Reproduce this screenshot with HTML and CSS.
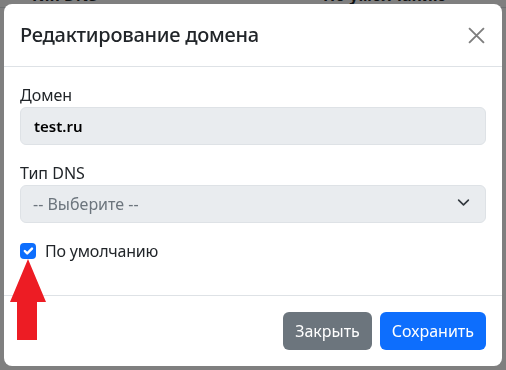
FILE: index.html
```
<!DOCTYPE html>
<html lang="ru">
<head>
    <meta charset="UTF-8">
    <meta name="viewport" content="width=device-width, initial-scale=1.0">
    <title>Домены</title>
    <link rel="stylesheet" href="styles.css">
</head>
<body>
    <div class="page">
        <table class="domains">
            <thead>
                <tr>
                    <th class="col-type">Тип DNS</th>
                    <th>По умолчанию</th>
                </tr>
            </thead>
        </table>
    </div>

    <div class="backdrop"></div>

    <div class="modal">
        <div class="modal-header">
            <h5 class="modal-title">Редактирование домена</h5>
            <button type="button" class="btn-close" aria-label="Close">
                <svg width="16" height="16" viewBox="0 0 16 16">
                    <path d="M1 1 15 15M15 1 1 15" stroke="#000" stroke-width="1.8" fill="none"/>
                </svg>
            </button>
        </div>

        <div class="modal-body">
            <div class="form-group">
                <label for="domain">Домен</label>
                <input type="text" id="domain" class="form-control" value="test.ru" readonly>
            </div>
            <div class="form-group">
                <label for="dns-type">Тип DNS</label>
                <div class="select-wrap">
                    <select id="dns-type" class="form-select" disabled>
                        <option>-- Выберите --</option>
                    </select>
                    <svg class="chevron" width="16" height="16" viewBox="0 0 16 16">
                        <path d="m2 5 6 6 6-6" stroke="#343a40" stroke-width="2" stroke-linecap="round" stroke-linejoin="round" fill="none"/>
                    </svg>
                </div>
            </div>
            <div class="form-check">
                <span class="check-box">
                    <svg width="16" height="16" viewBox="0 0 20 20">
                        <path d="m6 10 3 3 6-6" stroke="#fff" stroke-width="3" stroke-linecap="round" stroke-linejoin="round" fill="none"/>
                    </svg>
                </span>
                <label>По умолчанию</label>
            </div>
        </div>

        <div class="modal-footer">
            <button type="button" class="btn btn-secondary">Закрыть</button>
            <button type="button" class="btn btn-primary">Сохранить</button>
        </div>
    </div>

    <!-- annotation arrow -->
    <svg class="arrow" width="36" height="82" viewBox="0 0 36 82">
        <polygon points="18,0 36,43 27,43 27,81 7,81 7,43 0,43" fill="#ed1c24"/>
    </svg>
</body>
</html>
```

FILE: styles.css
```
body {
    font-family: 'Noto Sans', sans-serif;
    color: #212529;
    margin: 0;
    padding: 0;
    background-color: #fff;
    font-size: 16px;
    line-height: 1.5;
}
.page {
    margin-top: -17px;
}
.domains {
    border-collapse: collapse;
    width: 100%;
}
.domains th {
    text-align: left;
    padding: 0 0 0 30px;
    height: 24px;
    border-bottom: 1px solid #dee2e6;
}
.domains .col-type {
    width: 263px;
}
.backdrop {
    position: fixed;
    inset: 0;
    background-color: rgba(0, 0, 0, 0.5);
}
.modal {
    position: fixed;
    top: 4px;
    left: 4px;
    width: 498px;
    height: 362px;
    background-color: #fff;
    border-radius: 8px;
    display: flex;
    flex-direction: column;
    overflow: hidden;
}
.modal-header {
    display: flex;
    align-items: center;
    justify-content: space-between;
    padding: 16px;
    border-bottom: 1px solid #dee2e6;
}
.modal-title {
    margin: 0;
    font-size: 20px;
    font-weight: 500;
    line-height: 30px;
    letter-spacing: -0.25px;
}
.btn-close {
    border: none;
    background: none;
    padding: 0;
    margin-right: 1px;
    width: 17px;
    height: 17px;
    opacity: 0.5;
    display: flex;
    align-items: center;
    justify-content: center;
}
.btn-close svg {
    width: 17px;
    height: 17px;
}
.modal-body {
    padding: 16px;
    flex: 1;
}
.form-group {
    margin-bottom: 16px;
}
.form-group label {
    display: block;
}
.form-control,
.form-select {
    display: block;
    width: 100%;
    box-sizing: border-box;
    height: 38px;
    padding: 6px 12px;
    font-family: inherit;
    font-size: 16px;
    line-height: 1.5;
    border: 1px solid #dee2e6;
    border-radius: 6px;
    background-color: #e9ecef;
}
.form-control {
    color: #000;
    font-size: 15px;
    font-weight: 600;
    padding-left: 13px;
}
.form-select {
    appearance: none;
    color: #6c757d;
    opacity: 1;
}
.select-wrap {
    position: relative;
}
.chevron {
    position: absolute;
    right: 16px;
    top: 11px;
    width: 13px;
    height: 13px;
}
.form-check {
    display: flex;
    align-items: center;
    gap: 9px;
    height: 24px;
    margin-bottom: 16px;
    letter-spacing: -0.2px;
}
.check-box {
    width: 16px;
    height: 16px;
    border-radius: 4px;
    background-color: #0d6efd;
    display: flex;
}
.modal-footer {
    display: flex;
    justify-content: flex-end;
    gap: 8px;
    padding: 16px;
    border-top: 1px solid #dee2e6;
}
.btn {
    height: 38px;
    padding: 6px 12px;
    font-family: inherit;
    font-size: 16px;
    line-height: 1.5;
    color: #fff;
    border: none;
    border-radius: 6px;
}
.btn-secondary {
    background-color: #6c757d;
}
.btn-primary {
    background-color: #0d6efd;
}
.arrow {
    position: absolute;
    left: 10px;
    top: 259px;
}
```
